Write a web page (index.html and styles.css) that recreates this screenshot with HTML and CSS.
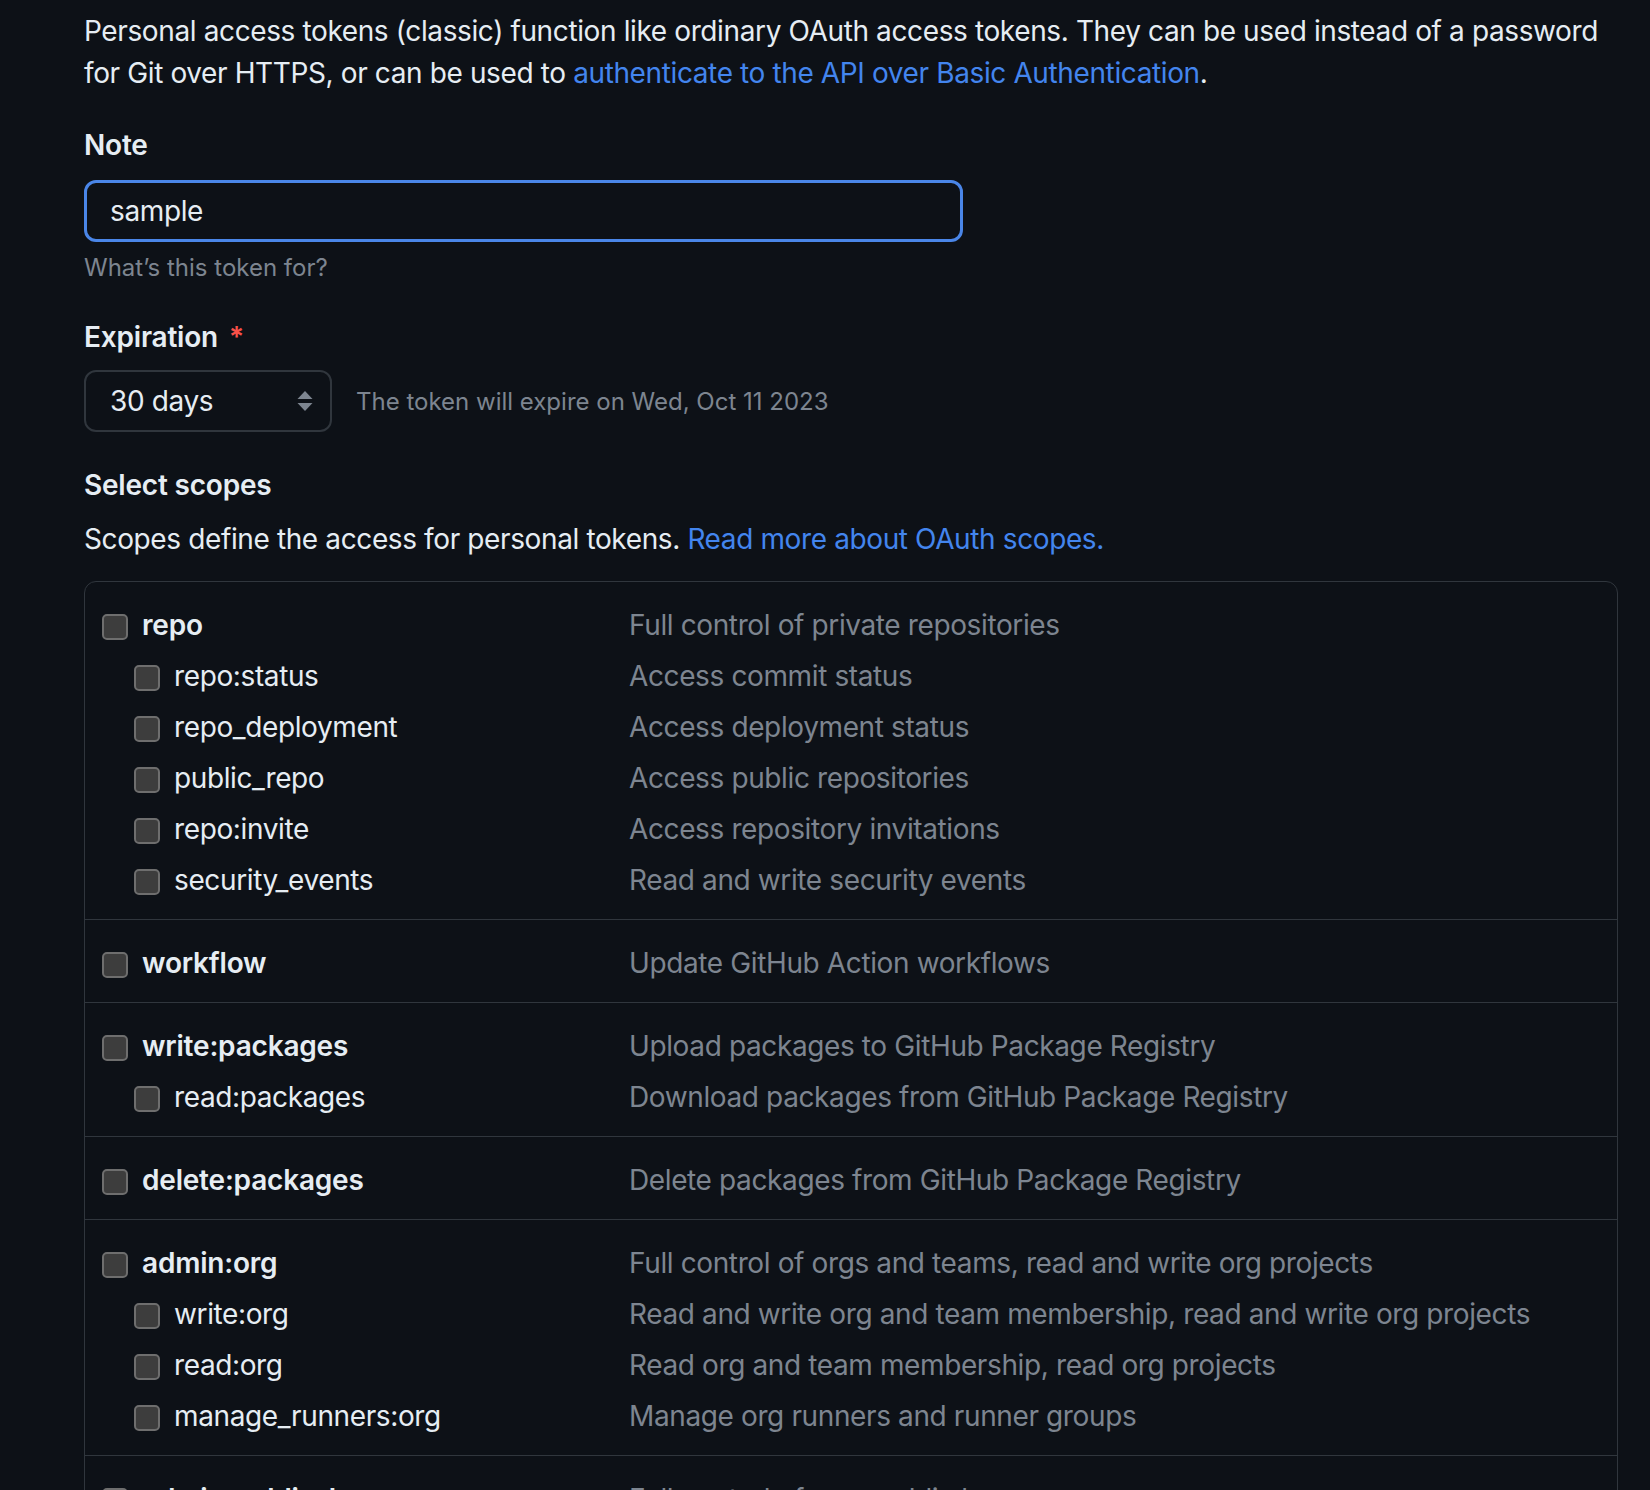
FILE: index.html
```html
<!DOCTYPE html>
<html lang="en">
<head>
<meta charset="utf-8">
<title>New personal access token (classic)</title>
<link rel="stylesheet" href="styles.css">
</head>
<body>
<div class="page">
  <p class="intro"><span class="line">Personal access tokens (classic) function like ordinary OAuth access tokens. They can be used instead of a password</span><br>for Git over HTTPS, or can be used to <a class="link" href="#">authenticate to the API over Basic Authentication</a>.</p>

  <div class="label note-label">Note</div>
  <input class="text-input" type="text" value="sample">
  <p class="hint">What’s this token for?</p>

  <div class="label exp-label">Expiration <span class="req">*</span></div>
  <div class="exp-row">
    <div class="select">
      <span>30 days</span>
      <svg class="arrows" width="16" height="22" viewBox="0 0 16 22"><path d="M8 1 L15.5 9 H0.5 Z" fill="#7d8590"/><path d="M0.5 13 H15.5 L8 21 Z" fill="#7d8590"/></svg>
    </div>
    <span class="exp-note">The token will expire on Wed, Oct 11 2023</span>
  </div>

  <div class="label scopes-label">Select scopes</div>
  <p class="scopes-desc">Scopes define the access for personal tokens. <a class="link" href="#">Read more about OAuth scopes.</a></p>

  <div class="scopes">
    <div class="group">
      <div class="row"><label class="name top"><input type="checkbox" class="cb">repo</label><span class="desc">Full control of private repositories</span></div>
      <div class="row"><label class="name sub"><input type="checkbox" class="cb">repo:status</label><span class="desc">Access commit status</span></div>
      <div class="row"><label class="name sub"><input type="checkbox" class="cb">repo_deployment</label><span class="desc">Access deployment status</span></div>
      <div class="row"><label class="name sub"><input type="checkbox" class="cb">public_repo</label><span class="desc">Access public repositories</span></div>
      <div class="row"><label class="name sub"><input type="checkbox" class="cb">repo:invite</label><span class="desc">Access repository invitations</span></div>
      <div class="row"><label class="name sub"><input type="checkbox" class="cb">security_events</label><span class="desc">Read and write security events</span></div>
    </div>
    <div class="group">
      <div class="row"><label class="name top"><input type="checkbox" class="cb">workflow</label><span class="desc">Update GitHub Action workflows</span></div>
    </div>
    <div class="group">
      <div class="row"><label class="name top"><input type="checkbox" class="cb">write:packages</label><span class="desc">Upload packages to GitHub Package Registry</span></div>
      <div class="row"><label class="name sub"><input type="checkbox" class="cb">read:packages</label><span class="desc">Download packages from GitHub Package Registry</span></div>
    </div>
    <div class="group">
      <div class="row"><label class="name top"><input type="checkbox" class="cb">delete:packages</label><span class="desc">Delete packages from GitHub Package Registry</span></div>
    </div>
    <div class="group">
      <div class="row"><label class="name top"><input type="checkbox" class="cb">admin:org</label><span class="desc">Full control of orgs and teams, read and write org projects</span></div>
      <div class="row"><label class="name sub"><input type="checkbox" class="cb">write:org</label><span class="desc">Read and write org and team membership, read and write org projects</span></div>
      <div class="row"><label class="name sub"><input type="checkbox" class="cb">read:org</label><span class="desc">Read org and team membership, read org projects</span></div>
      <div class="row"><label class="name sub"><input type="checkbox" class="cb">manage_runners:org</label><span class="desc">Manage org runners and runner groups</span></div>
    </div>
    <div class="group">
      <div class="row"><label class="name top"><input type="checkbox" class="cb">admin:public_key</label><span class="desc">Full control of user public keys</span></div>
      <div class="row"><label class="name sub"><input type="checkbox" class="cb">write:public_key</label><span class="desc">Write user public keys</span></div>
    </div>
  </div>
</div>
</body>
</html>
```

FILE: styles.css
```css
html, body {
  margin: 0;
  padding: 0;
  background: #0d1117;
}

body {
  font-family: Inter, "Liberation Sans", Arial, sans-serif;
  color: #e6edf3;
  font-size: 28px;
  letter-spacing: -0.38px;
}

.page {
  width: 1534px;
  padding: 10px 0 0 84px;
}

.intro {
  margin: 0;
  font-size: 28px;
  line-height: 42px;
}

.line {
  white-space: nowrap;
}

.link {
  color: #4385ee;
  text-decoration: none;
}

.label {
  font-size: 28px;
  font-weight: 600;
  line-height: 36px;
  letter-spacing: -0.2px;
}

.note-label {
  margin-top: 33px;
}

.text-input {
  display: block;
  box-sizing: border-box;
  margin: 17px 0 0 0;
  width: 879px;
  height: 62px;
  padding: 0 0 0 23px;
  border: 3px solid #4a86e8;
  border-radius: 12px;
  background: #0d1117;
  color: #e6edf3;
  font-family: inherit;
  font-size: 28px;
  letter-spacing: -0.38px;
  outline: none;
}

.hint {
  margin: 8px 0 0 0;
  font-size: 24px;
  line-height: 36px;
  letter-spacing: 0;
  color: #7d8590;
}

.exp-label {
  margin-top: 33px;
}

.req {
  color: #f85149;
  margin-left: 4px;
}

.exp-row {
  display: flex;
  align-items: center;
  gap: 24px;
  margin-top: 15px;
}

.select {
  box-sizing: border-box;
  width: 248px;
  height: 62px;
  display: flex;
  align-items: center;
  justify-content: space-between;
  padding: 0 17px 0 24px;
  border: 2px solid #30363d;
  border-radius: 12px;
  font-size: 28px;
}

.arrows {
  display: block;
}

.exp-note {
  font-size: 24px;
  letter-spacing: 0;
  color: #7d8590;
}

.scopes-label {
  margin-top: 35px;
}

.scopes-desc {
  margin: 15px 0 0 0;
  line-height: 42px;
}

.scopes {
  margin-top: 21px;
  border: 1px solid #30363d;
  border-radius: 12px;
}

.group {
  padding: 17px 0 14px 17px;
  border-top: 1px solid #30363d;
}

.group:first-child {
  border-top: none;
}

.row {
  display: flex;
  align-items: center;
  height: 51px;
}

.name {
  box-sizing: border-box;
  width: 527px;
  display: flex;
  align-items: center;
  gap: 14px;
  font-size: 28px;
}

.name.top {
  font-weight: 600;
  letter-spacing: -0.2px;
}

.name.sub {
  padding-left: 32px;
}

.cb {
  appearance: none;
  -webkit-appearance: none;
  box-sizing: border-box;
  margin: 4px 0 0 0;
  width: 26px;
  height: 26px;
  border: 2px solid #6e6e6e;
  border-radius: 5px;
  background: #3d3d3d;
  flex: none;
}

.desc {
  color: #7d8590;
  font-size: 28px;
}
```
